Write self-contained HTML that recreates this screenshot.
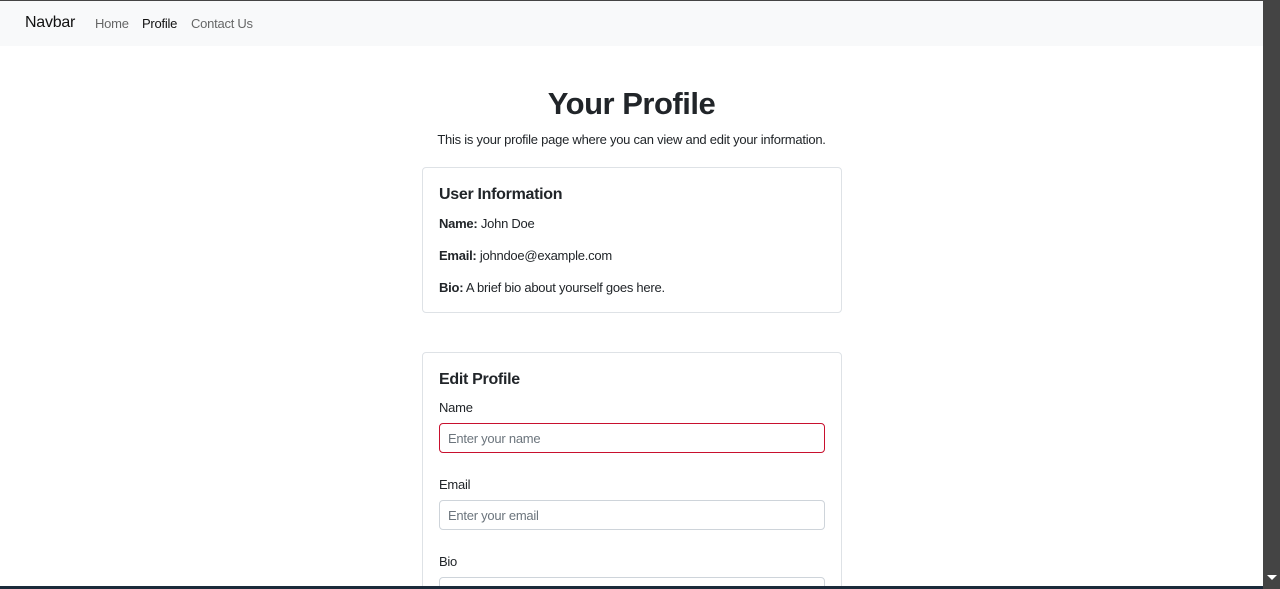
<!DOCTYPE html>
<html style="overflow:hidden;height:589px"><head><style>
*{box-sizing:border-box;margin:0;padding:0}
body{width:1280px;height:589px;overflow:hidden;position:relative;background:#fff;font-family:"Segoe UI","Liberation Sans",sans-serif;color:#212529;font-size:13px;letter-spacing:-0.25px}
.top{position:absolute;left:0;top:0;width:1263px;height:1px;background:#444}
.nav{position:absolute;left:0;top:1px;width:1263px;height:45px;background:#f8f9fa}
.nav span{position:absolute;top:15px;font-size:13px;color:rgba(0,0,0,.6)}
.sb{position:absolute;right:0;top:0;width:17px;height:589px;background:#444}
.bot{position:absolute;left:0;top:586px;width:1263px;height:3px;background:#1b2a3a}
.card{position:absolute;left:422px;width:420px;border:1px solid #dee2e6;border-radius:4px}
h1{position:absolute;top:86px;left:0;width:1263px;text-align:center;font-size:31px;font-weight:600;letter-spacing:-0.5px}
.sub{position:absolute;top:132px;left:0;width:1263px;text-align:center}
.t{position:absolute;left:16px;font-size:16px;font-weight:600;letter-spacing:-0.3px}
.p{position:absolute;left:16px}
.in{position:absolute;left:16px;width:386px;height:30px;border:1px solid #ced4da;border-radius:4px;padding:7px 8px;color:#6c757d}
</style></head><body>
<div class="top"></div>
<div class="nav">
<span style="left:25px;top:13px;font-size:16px;color:#111">Navbar</span>
<span style="left:95px">Home</span>
<span style="left:142px;color:#111">Profile</span>
<span style="left:191px">Contact Us</span>
</div>
<h1>Your Profile</h1>
<div class="sub">This is your profile page where you can view and edit your information.</div>
<div class="card" style="top:167px;height:146px">
<div class="t" style="top:18px">User Information</div>
<div class="p" style="top:48px"><b>Name:</b> John Doe</div>
<div class="p" style="top:80px"><b>Email:</b> johndoe@example.com</div>
<div class="p" style="top:112px"><b>Bio:</b> A brief bio about yourself goes here.</div>
</div>
<div class="card" style="top:352px;height:240px">
<div class="t" style="top:18px">Edit Profile</div>
<div class="p" style="top:47px">Name</div>
<div class="in" style="top:70px;border-color:#c8102e">Enter your name</div>
<div class="p" style="top:124px">Email</div>
<div class="in" style="top:147px">Enter your email</div>
<div class="p" style="top:201px">Bio</div>
<div class="in" style="top:224px"></div>
</div>
<div class="bot"></div>
<div class="sb"><div style="position:absolute;left:4px;top:575px;border-left:5px solid transparent;border-right:5px solid transparent;border-top:5px solid #fff"></div></div>
</body></html>
